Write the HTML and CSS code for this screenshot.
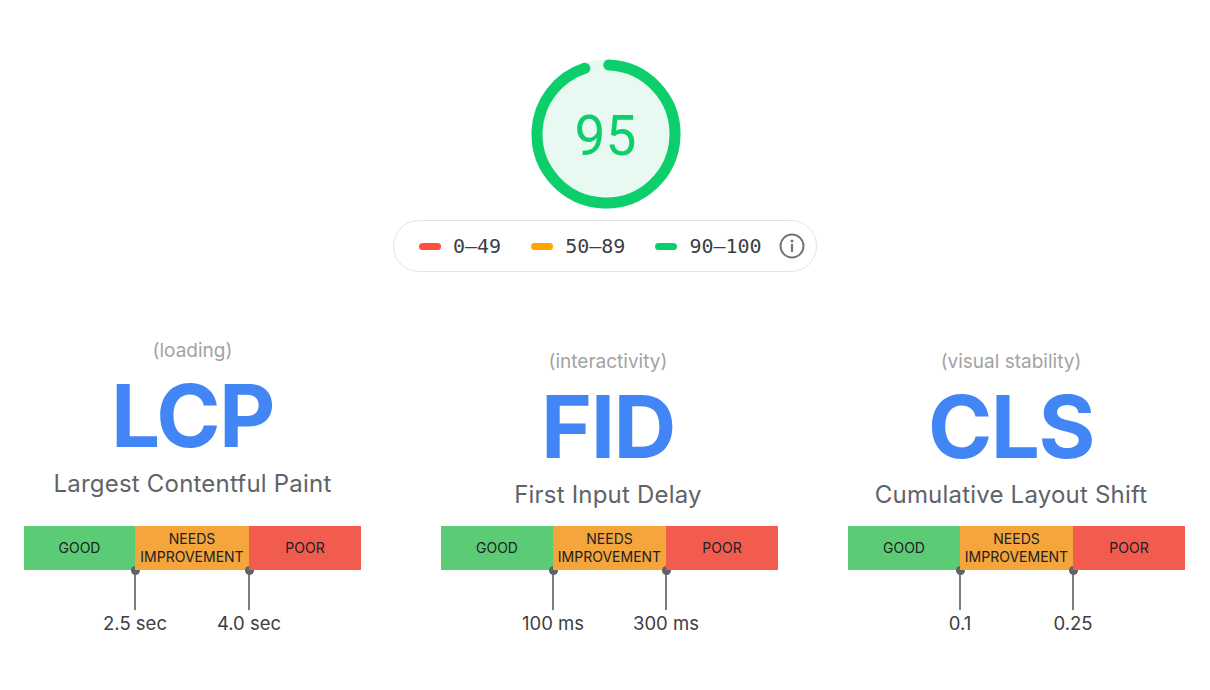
FILE: index.html
```html
<!DOCTYPE html>
<html lang="en">
<head>
<meta charset="utf-8">
<title>Core Web Vitals</title>
<link rel="stylesheet" href="styles.css">
</head>
<body>
<main class="page">
  <section class="score">
    <div class="gauge">
      <svg class="gauge-ring" width="150" height="150" viewBox="0 0 150 150" aria-hidden="true">
        <circle cx="75" cy="75" r="69" class="ring-bg"/>
        <circle cx="75" cy="75" r="69" class="ring-arc" pathLength="100" stroke-dasharray="94.4 100" transform="rotate(2.3 75 75) rotate(-90 75 75)"/>
      </svg>
      <span class="gauge-num">95</span>
    </div>
    <div class="legend">
      <span class="legend-item"><i class="pill pill-red"></i>0–49</span>
      <span class="legend-item"><i class="pill pill-orange"></i>50–89</span>
      <span class="legend-item"><i class="pill pill-green"></i>90–100</span>
      <svg class="info" width="26" height="26" viewBox="0 0 26 26" aria-hidden="true">
        <circle cx="13" cy="13" r="11.5" fill="none" stroke="#757575" stroke-width="2"/>
        <circle cx="13" cy="8" r="1.5" fill="#757575"/>
        <rect x="11.9" y="11" width="2.2" height="8" fill="#757575"/>
      </svg>
    </div>
  </section>

  <section class="metrics">
    <article class="metric metric-lcp">
      <header class="head">
        <p class="kind">(loading)</p>
        <h2 class="abbr">LCP</h2>
        <p class="name">Largest Contentful Paint</p>
      </header>
      <div class="bar">
        <div class="seg seg-good">GOOD<span class="tick"><span class="tick-label">2.5 sec</span></span></div>
        <div class="seg seg-mid">NEEDS IMPROVEMENT<span class="tick"><span class="tick-label">4.0 sec</span></span></div>
        <div class="seg seg-poor">POOR</div>
      </div>
    </article>
    <article class="metric metric-fid">
      <header class="head">
        <p class="kind">(interactivity)</p>
        <h2 class="abbr">FID</h2>
        <p class="name">First Input Delay</p>
      </header>
      <div class="bar">
        <div class="seg seg-good">GOOD<span class="tick"><span class="tick-label">100 ms</span></span></div>
        <div class="seg seg-mid">NEEDS IMPROVEMENT<span class="tick"><span class="tick-label">300 ms</span></span></div>
        <div class="seg seg-poor">POOR</div>
      </div>
    </article>
    <article class="metric metric-cls">
      <header class="head">
        <p class="kind">(visual stability)</p>
        <h2 class="abbr">CLS</h2>
        <p class="name">Cumulative Layout Shift</p>
      </header>
      <div class="bar">
        <div class="seg seg-good">GOOD<span class="tick"><span class="tick-label">0.1</span></span></div>
        <div class="seg seg-mid">NEEDS IMPROVEMENT<span class="tick"><span class="tick-label">0.25</span></span></div>
        <div class="seg seg-poor">POOR</div>
      </div>
    </article>
  </section>
</main>
</body>
</html>
```
FILE: styles.css
```css
* { box-sizing: border-box; }
html, body { margin: 0; height: 100%; background: #fff; overflow: hidden; }
body { font-family: Inter, Roboto, "Liberation Sans", sans-serif; color: #202124; }
.page { width: 1210px; height: 690px; display: flex; flex-direction: column; }

.score { display: flex; flex-direction: column; align-items: center; padding-top: 59px; }
.gauge { width: 150px; height: 150px; position: relative; margin-left: 1px; }
.gauge-ring { display: block; }
.ring-bg { fill: #e7f9f0; stroke: #e7f9f0; stroke-width: 11; }
.ring-arc { fill: none; stroke: #0ccf6c; stroke-width: 11; stroke-linecap: round; }
.gauge-num { position: absolute; inset: 0; display: flex; align-items: center; justify-content: center; padding-top: 4px; font-family: Roboto, sans-serif; font-size: 55px; color: #0cce6b; }

.legend { margin-top: 11px; width: 424px; height: 52px; border: 1px solid #e4e4e4; border-radius: 26px; display: flex; align-items: center; padding-left: 25px; font-family: "DejaVu Sans Mono", monospace; font-size: 20px; color: #3c4043; white-space: nowrap; }
.legend-item { display: flex; align-items: center; gap: 12px; margin-right: 30px; }
.pill { display: block; width: 22px; height: 7px; border-radius: 4px; }
.pill-red { background: #ff4e42; }
.pill-orange { background: #ffa400; }
.pill-green { background: #0ccf6c; }
.info { margin-left: -13px; }

.metrics { display: flex; align-items: flex-end; padding-left: 24px; margin-top: 68px; }
.metric { width: 337px; display: flex; flex-direction: column; }
.metric-fid { margin-left: 80px; }
.metric-cls { margin-left: 70px; }
.head { display: flex; flex-direction: column; align-items: center; text-align: center; }
.metric-lcp .head { padding-bottom: 11px; }
.metric-fid .head { padding-right: 3px; }
.metric-cls .head { padding-right: 11px; }
.kind { margin: 0; font-size: 19px; line-height: 22px; color: #a3a3a3; }
.abbr { margin: 1px 0 0; font-size: 87px; line-height: 106px; font-weight: 650; letter-spacing: -1.5px; color: #4285f4; }
.name { margin: 0 0 17px; font-size: 24px; line-height: 29px; letter-spacing: 0.2px; color: #5f6368; }

.bar { display: grid; grid-template-columns: 111px 114px 112px; height: 44px; }
.metric-fid .bar, .metric-cls .bar { grid-template-columns: 112px 113px 112px; }
.seg { position: relative; display: flex; align-items: center; justify-content: center; text-align: center; font-size: 14px; line-height: 18px; padding: 0 4px; }
.seg-good { background: #5ccb75; }
.seg-mid { background: #f4a53b; }
.seg-poor { background: #f15c4e; }

.tick { position: absolute; right: -1px; top: 100%; width: 2px; height: 40px; background: #7d7d7d; }
.tick::before { content: ""; position: absolute; left: -3.5px; top: -4.5px; width: 9px; height: 9px; border-radius: 50%; background: #5f6368; }
.tick-label { position: absolute; top: 41px; left: 50%; transform: translateX(-50%); white-space: nowrap; font-size: 18.5px; line-height: 24px; color: #3c4043; }
```
